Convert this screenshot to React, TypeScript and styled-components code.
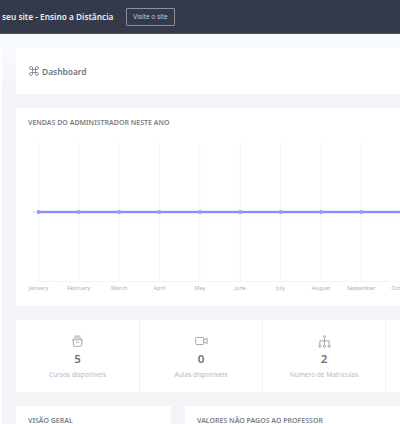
import styled, { createGlobalStyle } from 'styled-components';
import { Command } from 'lucide-react';

const MONTHS = ['January', 'February', 'March', 'April', 'May', 'June', 'July', 'August', 'September', 'October'];
const MONTH_STEP = 40.35;
const CHART_START = 22.5;

const GlobalStyle = createGlobalStyle`
  html, body {
    margin: 0;
    padding: 0;
    background: #f4f5f9;
    font-family: "Noto Sans", "Open Sans", "Liberation Sans", sans-serif;
  }
`;

const BasketIcon = () => (
  <svg width="13" height="12" viewBox="0 0 14 13" fill="none" stroke="#8d97a3" strokeWidth="0.9">
    <path d="M4 1.2h6M2.8 3.2h8.4M1.2 5.2h11.6" />
    <path d="M2 5.2l.8 6.4a.8.8 0 0 0 .8.7h6.8a.8.8 0 0 0 .8-.7l.8-6.4" />
    <path d="M5.5 8h3" />
  </svg>
);

const CameraIcon = () => (
  <svg width="13" height="10" viewBox="0 0 14 11" fill="none" stroke="#8d97a3" strokeWidth="0.9">
    <rect x="0.6" y="1.6" width="8.8" height="7.8" rx="1" />
    <path d="M9.4 4.4l3.8-1.8v5.8L9.4 6.6" />
  </svg>
);

const TreeIcon = () => (
  <svg width="13" height="13" viewBox="0 0 14 14" fill="none" stroke="#8d97a3" strokeWidth="0.9">
    <circle cx="7" cy="1.6" r="1" />
    <path d="M7 2.6v8M2 10.6V6.4h10v4.2" />
    <circle cx="2" cy="12" r="1.2" />
    <circle cx="7" cy="12" r="1.2" />
    <circle cx="12" cy="12" r="1.2" />
  </svg>
);

const STATS = [
  { icon: <BasketIcon />, value: '5', label: 'Cursos disponíveis' },
  { icon: <CameraIcon />, value: '0', label: 'Aulas disponíveis' },
  { icon: <TreeIcon />, value: '2', label: 'Número de Matrículas' },
];

const SalesChart = () => (
  <ChartSvg width="460" height="166" viewBox="0 0 460 166">
    {MONTHS.map((month, index) => {
      const x = CHART_START + index * MONTH_STEP;
      return (
        <g key={month}>
          <line x1={x} x2={x} y1="8" y2="146" stroke="#f3f4f7" />
          <text x={x} y="155" textAnchor="middle" fontSize="5.5" fill="#a9aebb">
            {month}
          </text>
        </g>
      );
    })}
    <line x1={CHART_START} x2="460" y1="146.5" y2="146.5" stroke="#f3f4f7" />
    <line x1="17" x2={CHART_START} y1="77" y2="77" stroke="#dcdde3" />
    <line x1={CHART_START} x2="460" y1="77" y2="77" stroke="#727eff" strokeOpacity="0.2" strokeWidth="3.4" />
    <line x1={CHART_START} x2="460" y1="77" y2="77" stroke="#6470ff" strokeWidth="1.5" />
    {MONTHS.map((month, index) => (
      <circle key={month} cx={CHART_START + index * MONTH_STEP} cy="77" r="1.9" fill="#939aff" />
    ))}
  </ChartSvg>
);

export default function App() {
  return (
    <Page>
      <GlobalStyle />
      <TopBar>
        <SiteTitle>seu site - Ensino a Distância</SiteTitle>
        <VisitButton>Visite o site</VisitButton>
      </TopBar>
      <Body>
        <SideEdge />
        <Main>
          <TitleCard>
            <Command size={12} color="#6f7683" strokeWidth={1.5} />
            <PageName>Dashboard</PageName>
          </TitleCard>
          <ChartCard>
            <CardTitle>VENDAS DO ADMINISTRADOR NESTE ANO</CardTitle>
            <SalesChart />
          </ChartCard>
          <StatsRow>
            {STATS.map(stat => (
              <StatCell key={stat.label}>
                <StatIcon>{stat.icon}</StatIcon>
                <StatValue>{stat.value}</StatValue>
                <StatLabel>{stat.label}</StatLabel>
              </StatCell>
            ))}
            <StatCell />
          </StatsRow>
          <BottomRow>
            <BottomCard>
              <CardTitle>VISÃO GERAL</CardTitle>
            </BottomCard>
            <BottomCard>
              <CardTitle>VALORES NÃO PAGOS AO PROFESSOR</CardTitle>
            </BottomCard>
          </BottomRow>
        </Main>
      </Body>
    </Page>
  );
}

const Page = styled.div`
  width: 400px;
  height: 424px;
  overflow: hidden;
  background: #f4f5f9;
`;

const TopBar = styled.header`
  height: 33px;
  box-sizing: content-box;
  border-bottom: 1px solid #4a5060;
  background: #343a4a;
  display: flex;
  align-items: center;
  padding-left: 2px;
  gap: 12px;
`;

const SiteTitle = styled.span`
  width: 112px;
  flex: none;
  color: #eceef2;
  font-size: 8.3px;
  font-weight: 600;
  white-space: nowrap;
`;

const VisitButton = styled.button`
  width: 49px;
  height: 18px;
  padding: 0;
  border: 1px solid #8b909c;
  border-radius: 1px;
  background: transparent;
  color: #c6c9d0;
  font-family: inherit;
  font-size: 6.5px;
`;

const Body = styled.div`
  display: flex;
  background: linear-gradient(#f9fafe 0, #f9fafe 14px, #f3f4f8 60px);
`;

const SideEdge = styled.aside`
  width: 2px;
  margin-top: 14px;
  flex: none;
  height: 400px;
  background: #ffffff;
`;

const Main = styled.main`
  flex: 1;
  min-width: 0;
  padding: 14px 0 0 14px;
  display: flex;
  flex-direction: column;
  gap: 14px;
`;

const TitleCard = styled.section`
  height: 46px;
  background: #ffffff;
  display: flex;
  align-items: center;
  gap: 2px;
  padding-left: 12px;
`;

const PageName = styled.h1`
  margin: 0;
  color: #6f7683;
  font-size: 8.4px;
  font-weight: 600;
`;

const ChartCard = styled.section`
  height: 198px;
  overflow: hidden;
  background: #ffffff;
  padding-top: 10px;
  box-sizing: border-box;
`;

const CardTitle = styled.h2`
  margin: 0;
  padding-left: 12px;
  color: #777e8a;
  font-size: 7px;
  line-height: 9px;
  font-weight: 600;
  white-space: nowrap;
`;

const ChartSvg = styled.svg`
  display: block;
  margin-top: 8px;
`;

const StatsRow = styled.section`
  display: grid;
  grid-template-columns: 123px repeat(3, 122px);
  gap: 1px;
  height: 72px;
  background: #f0f1f5;
`;

const StatCell = styled.div`
  background: #ffffff;
  display: flex;
  flex-direction: column;
  align-items: center;
  padding-top: 14px;
  box-sizing: border-box;
`;

const StatIcon = styled.div`
  height: 14px;
  display: flex;
  align-items: center;
  justify-content: center;
`;

const StatValue = styled.strong`
  margin-top: 3px;
  color: #6a717d;
  font-size: 11.5px;
  line-height: 16px;
  font-weight: 600;
`;

const StatLabel = styled.span`
  margin-top: 3px;
  color: #b4b9c3;
  font-size: 6.55px;
  line-height: 10px;
  white-space: nowrap;
`;

const BottomRow = styled.section`
  display: grid;
  grid-template-columns: 155px 1fr;
  gap: 14px;
`;

const BottomCard = styled.div`
  height: 60px;
  background: #ffffff;
  padding-top: 10px;
  box-sizing: border-box;
`;
